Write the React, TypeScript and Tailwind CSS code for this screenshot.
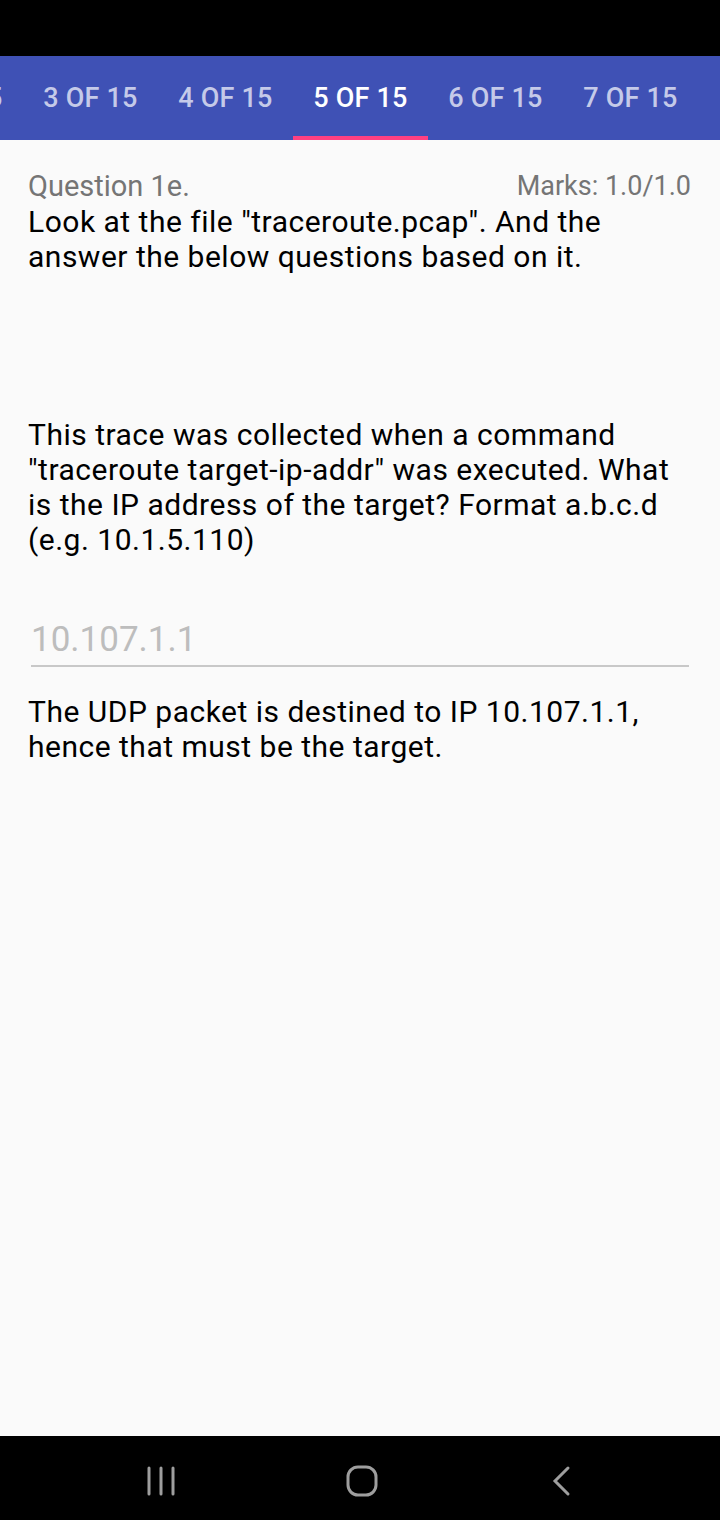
import React from "react";

const tabs = ["2 OF 15", "3 OF 15", "4 OF 15", "5 OF 15", "6 OF 15", "7 OF 15"];
const active = "5 OF 15";

const App: React.FC = () => {
  return (
    <div
      className="w-[720px] h-[1520px] flex flex-col bg-[#fafafa] overflow-hidden"
      style={{ fontFamily: "Roboto, 'Noto Sans', sans-serif" }}
    >
      {/* status bar */}
      <div className="h-[56px] bg-black shrink-0" />

      {/* tab strip */}
      <div className="h-[84px] bg-[#3f51b5] shrink-0 flex ml-[-112px]">
        {tabs.map((t) => (
          <div
            key={t}
            className={`w-[135px] shrink-0 flex flex-col ${
              t === active ? "text-white" : "text-[#c5cae9]"
            }`}
          >
            <div className="flex-1 flex items-center justify-center pt-[5px] text-[27px] font-medium tracking-[0.2px]">
              {t}
            </div>
            <div className={`h-[4px] ${t === active ? "bg-[#ff4081]" : ""}`} />
          </div>
        ))}
      </div>

      {/* content */}
      <div className="flex-1 px-[28px] pt-[29px] text-[30px] leading-[35px] tracking-[0.5px] text-black">
        <div className="flex items-center justify-between">
          <span className="text-[29px] tracking-normal text-[#757575]">Question 1e.</span>
          <span className="text-[27px] tracking-normal text-[#757575] mr-[1px]">Marks: 1.0/1.0</span>
        </div>
        <p>Look at the file "traceroute.pcap". And the answer the below questions based on it.</p>

        <p className="mt-[143px]">
          This trace was collected when a command "traceroute target-ip-addr" was executed. What is
          the IP address of the target? Format a.b.c.d (e.g. 10.1.5.110)
        </p>

        <div className="mt-[60px] ml-[3px] mr-[3px] border-b-2 border-[#c8c8c8] pb-[3px]">
          <div className="text-[35px] leading-[45px] tracking-normal text-[#bdbdbd]">10.107.1.1</div>
        </div>

        <p className="mt-[27px]">
          The UDP packet is destined to IP 10.107.1.1, hence that must be the target.
        </p>
      </div>

      {/* nav bar */}
      <div className="h-[84px] bg-black shrink-0 flex items-center justify-between pt-[6px] pl-[146px] pr-[148px]">
        <svg width="30" height="30" viewBox="0 0 30 30" fill="none" stroke="#9e9e9e" strokeWidth="3" strokeLinecap="round">
          <path d="M3 2v26M15 2v26M27 2v26" />
        </svg>
        <svg width="32" height="32" viewBox="0 0 32 32" fill="none" stroke="#9e9e9e" strokeWidth="3" className="mr-[4px]">
          <rect x="2" y="2" width="28" height="28" rx="10" />
        </svg>
        <svg width="20" height="32" viewBox="0 0 20 32" fill="none" stroke="#9e9e9e" strokeWidth="3" strokeLinecap="round">
          <path d="M16 3L3 16l13 13" />
        </svg>
      </div>
    </div>
  );
};

export default App;
